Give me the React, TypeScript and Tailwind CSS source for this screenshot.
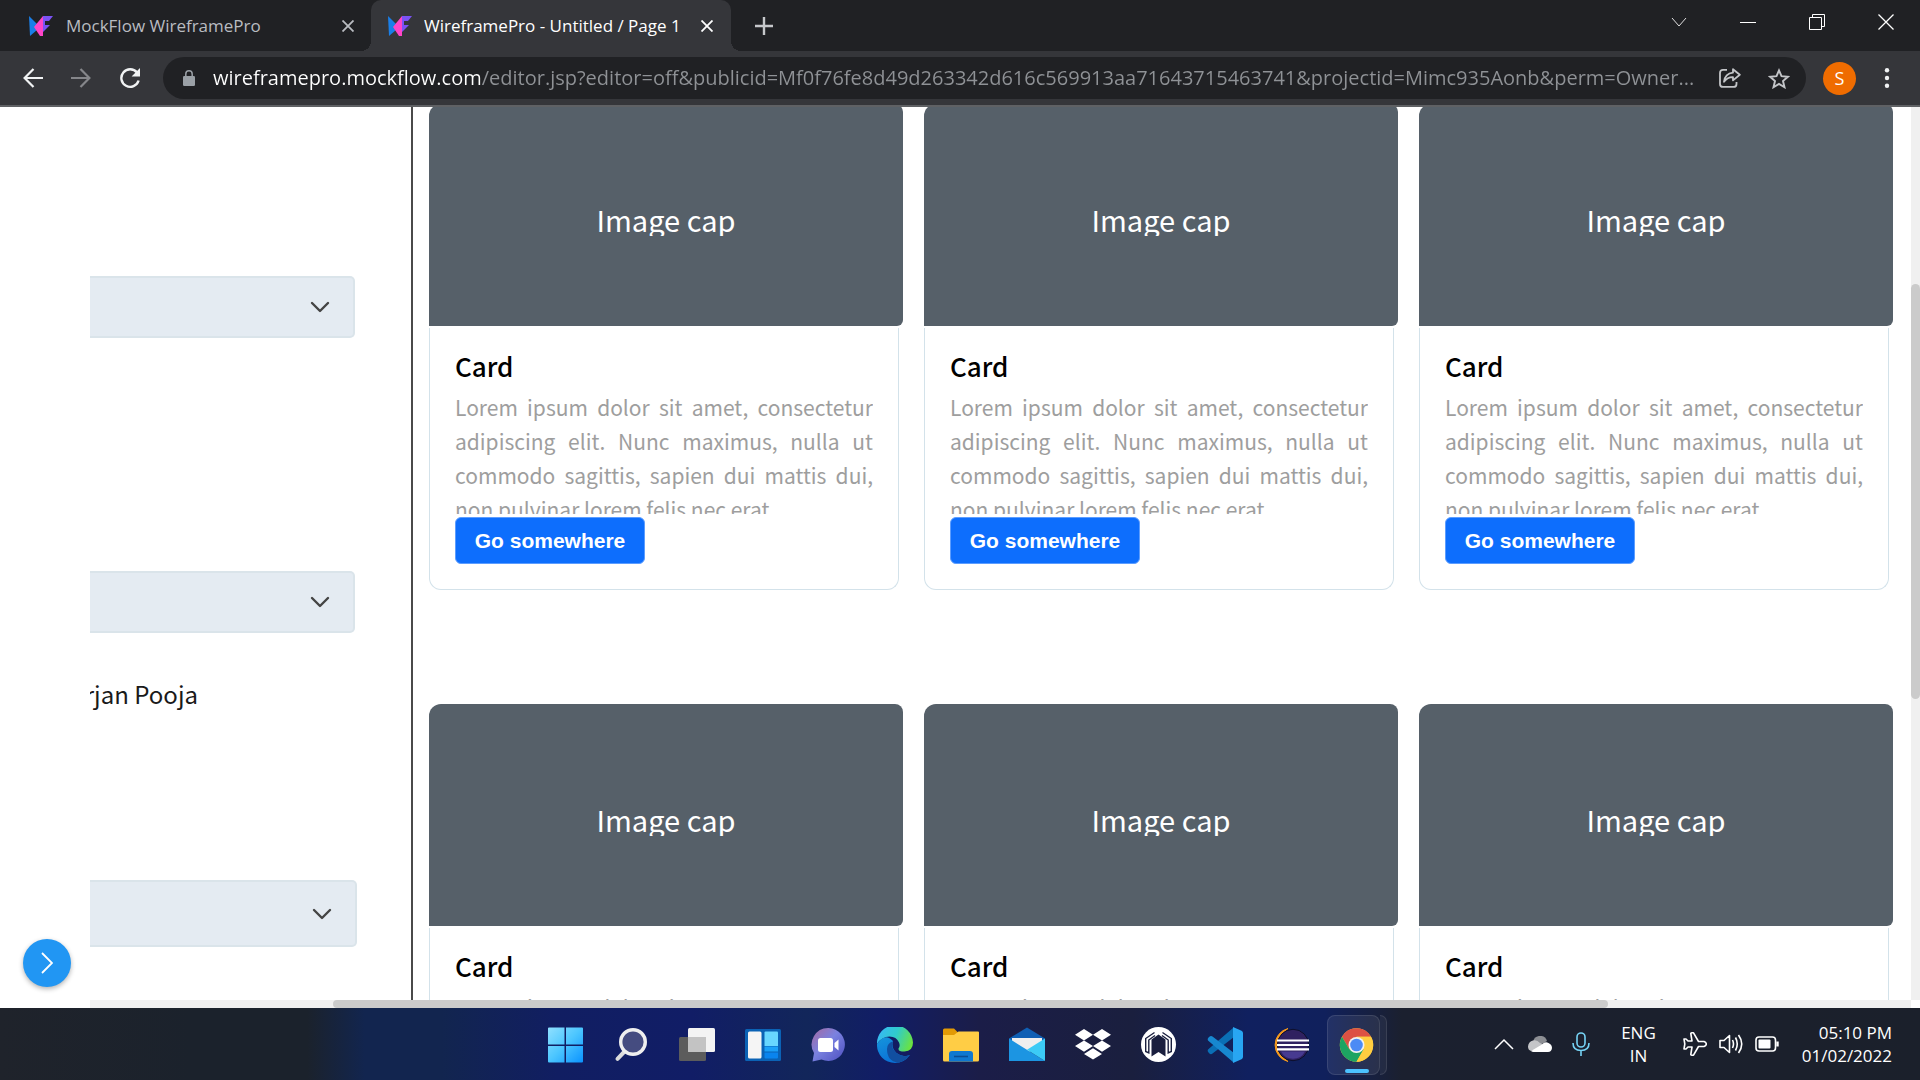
import React from "react";

const UI_FONT = "font-['Open_Sans','Noto_Sans',sans-serif]";
const CANVAS_FONT = "font-['Noto_Sans_CJK_SC','Noto_Sans',sans-serif]";

const PAGE_URL =
  "wireframepro.mockflow.com/editor.jsp?editor=off&publicid=Mf0f76fe8d49d263342d616c569913aa71643715463741&projectid=Mimc935Aonb&perm=Owner...";

const LOREM =
  "Lorem ipsum dolor sit amet, consectetur adipiscing elit. Nunc maximus, nulla ut commodo sagittis, sapien dui mattis dui, non pulvinar lorem felis nec erat";

function MockFlowLogo() {
  return (
    <svg viewBox="0 0 24 22" className="h-[22px] w-6 shrink-0" aria-hidden="true">
      <path d="M0 1 L8 9 L8 15 L1 21 Z" fill="#1a7fe8" />
      <path d="M14 1 L14 21 L11 21 L5 12 Z" fill="#ff45c8" />
      <path d="M14 1 H24 L20 6 H16 V10 H21 L14 17 Z" fill="#7a52f4" />
    </svg>
  );
}

function CloseIcon() {
  return (
    <svg viewBox="0 0 12 12" className="size-3" fill="none" stroke="currentColor" strokeWidth="1.8" aria-hidden="true">
      <path d="M.5 .5 L11.5 11.5 M11.5 .5 L.5 11.5" />
    </svg>
  );
}

function TabStrip() {
  return (
    <div className="flex h-[51px] bg-[#202124]">
      <div className="flex w-[371px] items-center pr-[17px] pl-[29px] text-[#b9bcc1]">
        <MockFlowLogo />
        <span className="ml-[13px] flex-1 truncate text-[17px]">MockFlow WireframePro</span>
        <button aria-label="Close MockFlow WireframePro">
          <CloseIcon />
        </button>
      </div>
      <div className="relative flex w-[360px] items-center rounded-t-[10px] bg-[#35363a] pr-[18px] pl-[17px] text-white">
        <span className="absolute bottom-0 -left-2.5 size-2.5 bg-[radial-gradient(circle_at_0_0,#202124_10px,#35363a_10px)]" />
        <span className="absolute -right-2.5 bottom-0 size-2.5 bg-[radial-gradient(circle_at_100%_0,#202124_10px,#35363a_10px)]" />
        <MockFlowLogo />
        <span className="ml-3 flex-1 overflow-hidden text-[17px] whitespace-nowrap">WireframePro - Untitled / Page 1</span>
        <button aria-label="Close WireframePro - Untitled / Page 1">
          <CloseIcon />
        </button>
      </div>
      <button aria-label="New tab" className="ml-6 text-[#c6c8cb]">
        <svg viewBox="0 0 18 18" className="size-[18px]" stroke="currentColor" strokeWidth="2.4" aria-hidden="true">
          <path d="M9 0 V18 M0 9 H18" />
        </svg>
      </button>
      <div className="ml-auto flex items-center gap-[53px] pr-[26px] pb-2 text-white">
        <button aria-label="Search tabs">
          <svg viewBox="0 0 16 16" className="size-4" fill="none" stroke="#e0e0e0" aria-hidden="true">
            <path d="M1 4 L8 12 L15 4" />
          </svg>
        </button>
        <button aria-label="Minimize">
          <svg viewBox="0 0 16 16" className="size-4" stroke="currentColor" aria-hidden="true">
            <path d="M0 8.5 H16" />
          </svg>
        </button>
        <button aria-label="Restore">
          <svg viewBox="0 0 16 16" className="size-4" fill="none" stroke="currentColor" aria-hidden="true">
            <path d="M.5 3.5 H12.5 V15.5 H.5 Z M3.5 3.5 V.5 H15.5 V12.5 H12.5" />
          </svg>
        </button>
        <button aria-label="Close window">
          <svg viewBox="0 0 16 16" className="size-4" fill="none" stroke="currentColor" strokeWidth="1.3" aria-hidden="true">
            <path d="M.5 .5 L15.5 15.5 M15.5 .5 L.5 15.5" />
          </svg>
        </button>
      </div>
    </div>
  );
}

function Toolbar() {
  return (
    <div className="flex h-14 items-center border-b-2 border-[#5f6164] bg-[#35363a] pr-[30px] pl-[23px]">
      <button aria-label="Back" className="mr-7">
        <svg viewBox="0 0 20 20" className="size-5" fill="none" stroke="#f1f3f4" strokeWidth="2.2" aria-hidden="true">
          <path d="M20 10 H2 M10.5 1 L1.6 10 L10.5 19" />
        </svg>
      </button>
      <button aria-label="Forward" className="mr-7">
        <svg viewBox="0 0 20 20" className="size-5" fill="none" stroke="#85868a" strokeWidth="2.2" aria-hidden="true">
          <path d="M0 10 H18 M9.5 1 L18.4 10 L9.5 19" />
        </svg>
      </button>
      <button aria-label="Reload" className="mr-[22px]">
        <svg viewBox="0 0 22 22" className="size-[22px]" fill="none" stroke="#f1f3f4" strokeWidth="2.4" aria-hidden="true">
          <path d="M18 5.5 A8.8 8.8 0 1 0 19.6 13.5" />
          <path d="M21 1 V9.4 H12.6 Z" fill="#f1f3f4" stroke="none" />
        </svg>
      </button>
      <div className="flex h-[42px] min-w-0 flex-1 items-center rounded-full bg-[#202124] pr-4 pl-5">
        <svg viewBox="0 0 12 16" className="h-4 w-3 shrink-0" fill="#9aa0a6" aria-hidden="true">
          <path d="M1.2 6 H10.8 Q12 6 12 7.2 V14.8 Q12 16 10.8 16 H1.2 Q0 16 0 14.8 V7.2 Q0 6 1.2 6 Z" />
          <path d="M2.8 6.5 V4 A3.2 3.2 0 0 1 9.2 4 V6.5" fill="none" stroke="#9aa0a6" strokeWidth="1.5" />
        </svg>
        <input
          aria-label="Address"
          readOnly
          value={PAGE_URL}
          className="ml-[18px] min-w-0 flex-1 bg-[linear-gradient(90deg,#ffffff_269px,#8f9296_269px)] bg-clip-text text-xl text-transparent outline-none"
        />
        <button aria-label="Share" className="ml-4">
          <svg viewBox="0 0 22 20" className="h-5 w-[22px]" fill="none" stroke="#c3c5c8" strokeWidth="1.8" strokeLinejoin="round" aria-hidden="true">
            <path d="M8 1.9 H4 Q1 1.9 1 4.9 V15.9 Q1 18.9 4 18.9 H14.5 Q17.5 18.9 17.5 15.9 V14" />
            <path d="M14 1.2 L20.8 6.8 L14 12.4 V9.2 Q8.5 9 5 13.8 Q6 5.4 14 4.6 Z" />
          </svg>
        </button>
        <button aria-label="Bookmark" className="ml-[27px]">
          <svg viewBox="0 0 22 21" className="h-[21px] w-[22px]" fill="none" stroke="#c3c5c8" strokeWidth="1.9" aria-hidden="true">
            <path d="M11 2.4 L13.5 8.2 L19.8 8.8 L15 13 L16.5 19.2 L11 15.9 L5.5 19.2 L7 13 L2.2 8.8 L8.5 8.2 Z" />
          </svg>
        </button>
      </div>
      <button className="ml-[17px] size-[33px] rounded-full bg-[#ef6c00] text-lg text-white">S</button>
      <button aria-label="Chrome menu" className="ml-7">
        <svg viewBox="0 0 6 20" className="h-5 w-1.5" fill="#f1f3f4" aria-hidden="true">
          <circle cx="3" cy="2.3" r="2.2" />
          <circle cx="3" cy="10" r="2.2" />
          <circle cx="3" cy="17.7" r="2.2" />
        </svg>
      </button>
    </div>
  );
}

function FilterSelect({ label, size }: { label: string; size: string }) {
  return (
    <div className={`grid items-center ${size}`}>
      <select
        aria-label={label}
        className="col-start-1 row-start-1 size-full appearance-none rounded-r-[5px] border-y-2 border-r-2 border-[#dae4ea] bg-[#e4ebf2]"
      />
      <svg
        viewBox="0 0 20 12"
        className="pointer-events-none col-start-1 row-start-1 mr-[25px] h-3 w-5 justify-self-end"
        fill="none"
        stroke="#444444"
        strokeWidth="2.4"
        strokeLinecap="round"
        strokeLinejoin="round"
        aria-hidden="true"
      >
        <path d="M2 2 L10 10 L18 2" />
      </svg>
    </div>
  );
}

function FilterPane() {
  return (
    <div className="flex w-[321px] shrink-0 flex-col pt-[169px]">
      <FilterSelect label="First filter" size="h-[62px] w-[265px]" />
      <FilterSelect label="Second filter" size="mt-[233px] h-[62px] w-[265px]" />
      <div className="mt-[42px] flex w-[108px] justify-end overflow-hidden text-2xl leading-[38px] whitespace-nowrap text-[#1a1a1a]">
        rjan Pooja
      </div>
      <FilterSelect label="Third filter" size="mt-[167px] h-[67px] w-[267px]" />
    </div>
  );
}

function Card() {
  return (
    <article>
      <div className="flex h-[222px] items-center justify-center rounded-tl-xl rounded-r-lg rounded-br-md bg-[#566069]">
        <span className="h-[41px] overflow-hidden text-[29px] leading-[48px] text-white">Image cap</span>
      </div>
      <div className="mt-0.5 mr-1 h-[262px] rounded-b-xl border-x border-b border-[#d3e2ea] px-[25px] pt-[18px]">
        <h2 className="h-[31px] overflow-hidden text-[26px] leading-10 font-medium text-black">Card</h2>
        <p className="mt-[13px] h-[124px] overflow-hidden text-justify text-[21px] leading-[34px] text-[#9e9e9e]">{LOREM}</p>
        <button className="mt-[3px] h-[47px] w-[190px] rounded-md border border-[#5c9dff] bg-[#0d6efd] font-['Liberation_Sans',sans-serif] text-[21px] font-bold text-white">
          Go somewhere
        </button>
      </div>
    </article>
  );
}

function Workspace() {
  return (
    <main className={`flex min-h-0 flex-1 bg-white ${CANVAS_FONT}`}>
      <div className="flex w-[90px] shrink-0 flex-col justify-end pb-[21px] pl-[23px]">
        <button aria-label="Expand panel" className="flex size-12 items-center justify-center rounded-full bg-[#2196f3] shadow-[0_2px_5px_rgba(0,0,0,0.3)]">
          <svg viewBox="0 0 12 22" className="h-[22px] w-3" fill="none" stroke="#ffffff" strokeWidth="1.8" aria-hidden="true">
            <path d="M1 1 L11 11 L1 21" />
          </svg>
        </button>
      </div>
      <div className="flex min-w-0 flex-1 flex-col">
        <div className="flex min-h-0 flex-1 overflow-hidden">
          <FilterPane />
          <div className="min-w-0 flex-1 border-l-2 border-[#4a4a4a] pr-[18px] pl-4">
            <div className="-mt-[3px] grid grid-cols-3 gap-x-[21px] gap-y-[114px]">
              {[1, 2, 3, 4, 5, 6].map((n) => (
                <Card key={n} />
              ))}
            </div>
          </div>
        </div>
        <div className="h-2 shrink-0 bg-[#f0f0f0] pr-[303px] pl-[243px]">
          <div className="h-full rounded-full bg-[#cbcbcb]" />
        </div>
      </div>
      <div className="mb-2 w-[9px] shrink-0 bg-[#f0f0f0] pt-[177px]">
        <div className="h-[415px] rounded-full bg-[#cbcbcb]" />
      </div>
    </main>
  );
}

const APPS: { name: string; art: React.ReactNode }[] = [
  {
    name: "Start",
    art: (
      <>
        <defs>
          <linearGradient id="win" gradientUnits="userSpaceOnUse" x1="1" y1="1" x2="35" y2="35">
            <stop offset="0" stopColor="#8fe0ff" />
            <stop offset=".5" stopColor="#4cc6ff" />
            <stop offset="1" stopColor="#0d95ff" />
          </linearGradient>
        </defs>
        <path d="M2 .5 H17.5 V17.5 H1 V1.5 Q1 .5 2 .5 Z M19 .5 H35 Q36 .5 36 1.5 V17.5 H19 Z M1 19 H17.5 V35.5 H2 Q1 35.5 1 34.5 Z M19 19 H36 V34.5 Q36 35.5 35 35.5 H19 Z" fill="url(#win)" />
      </>
    ),
  },
  {
    name: "Search",
    art: (
      <>
        <path d="M12 24 L4.5 31.8" stroke="#dcdcdc" strokeWidth="4" strokeLinecap="round" />
        <circle cx="20" cy="15" r="12.3" fill="#454c80" stroke="#efefef" strokeWidth="3.4" />
      </>
    ),
  },
  {
    name: "Task View",
    art: (
      <>
        <rect x="0" y="10" width="27" height="24" rx="1.5" fill="#5c5c5c" />
        <rect x="9" y="1" width="27" height="24" rx="1.5" fill="#f3f3f3" />
        <path d="M9 10 H27 V25 H10.5 Q9 25 9 23.5 Z" fill="#c3c3c3" />
      </>
    ),
  },
  {
    name: "Widgets",
    art: (
      <>
        <rect x="0" y="2" width="36" height="32" rx="1.5" fill="#0b62b5" />
        <rect x="3" y="4.5" width="13.5" height="27" rx="1.5" fill="#f5f5f5" />
        <path d="M20.5 4.5 H32 Q33 4.5 33 5.5 V19 H19.5 V5.5 Q19.5 4.5 20.5 4.5 Z" fill="#68d6ff" />
        <path d="M19.5 19.5 H33 V24.5 H19.5 Z" fill="#1ba0f8" />
        <path d="M19.5 25.5 H33 V30.5 Q33 31.5 32 31.5 H20.5 Q19.5 31.5 19.5 30.5 Z" fill="#0a84ee" />
      </>
    ),
  },
  {
    name: "Chat",
    art: (
      <>
        <defs>
          <linearGradient id="chat" x1="0" y1="0" x2="1" y2="1">
            <stop offset="0" stopColor="#a5689f" />
            <stop offset=".45" stopColor="#7a82e0" />
            <stop offset="1" stopColor="#4d4fc0" />
          </linearGradient>
        </defs>
        <path d="M17.5 1 A16.5 16.5 0 1 1 10.5 32.5 L1.500 34.5 L3 26 A16.5 16.5 0 0 1 17.5 1 Z" fill="url(#chat)" />
        <rect x="7" y="11" width="15" height="14" rx="2.5" fill="#ffffff" />
        <path d="M23.5 16 L27.5 12.5 V23.5 L23.5 20 Z" fill="#ffffff" />
      </>
    ),
  },
  {
    name: "Edge",
    art: (
      <>
        <defs>
          <linearGradient id="edgeTop" x1="0" y1=".3" x2="1" y2=".6">
            <stop offset="0" stopColor="#37b8f5" />
            <stop offset=".5" stopColor="#30cbcb" />
            <stop offset="1" stopColor="#6be33f" />
          </linearGradient>
          <linearGradient id="edgeBody" x1="0" y1="0" x2=".5" y2="1">
            <stop offset="0" stopColor="#1595dc" />
            <stop offset="1" stopColor="#0a6fd6" />
          </linearGradient>
        </defs>
        <path d="M0 17 A18 18 0 0 0 18 36 Q27 36 33 28 Q26 31 19.5 26 Q14 21 16 14 Q8 5 0 17 Z" fill="url(#edgeBody)" />
        <path d="M10 22 Q10 34 21 35.7 Q28 34.5 33 28 Q26 31 19.5 26 Q13.5 21 16 14.5 Q10 16 10 22 Z" fill="#114fa0" />
        <path d="M0 17 A18 18 0 0 1 36 15.5 Q36 24 27.5 24.5 Q21 24.5 21.5 21.5 Q23.5 19 22 15.5 Q19.5 9.5 12.5 9.5 Q4.5 9.5 0 17 Z" fill="url(#edgeTop)" />
      </>
    ),
  },
  {
    name: "File Explorer",
    art: (
      <>
        <path d="M0 3 Q0 1.5 1.5 1.5 H11 L15.5 6 V12 H0 Z" fill="#e29a05" />
        <path d="M0 8 H11 L15.5 4.5 H35 Q36 4.5 36 5.5 V33 Q36 34.5 34.5 34.5 H1.5 Q0 34.5 0 33 Z" fill="#ffcd45" />
        <path d="M6 34.5 V27 Q6 24 9 24 H27 Q30 24 30 27 V34.5 Z" fill="#0f78d0" />
        <path d="M11 29.5 H25" stroke="#0b4d93" strokeWidth="1.6" />
      </>
    ),
  },
  {
    name: "Mail",
    art: (
      <>
        <path d="M0 11.5 L18 .5 L36 11.5 V16 H0 Z" fill="#0f5fb4" />
        <path d="M3 11 H33 V18 L18 26 L3 18 Z" fill="#efefef" />
        <path d="M0 11.5 L36 34 H0 Z" fill="#1c95e2" />
        <path d="M36 11.5 V34 L18 22.7 Z" fill="#3ccbf6" />
      </>
    ),
  },
  {
    name: "Dropbox",
    art: (
      <path
        d="M9 2 L18 7.7 L9 13.4 L0 7.7 Z M27 2 L36 7.7 L27 13.4 L18 7.7 Z M9 13.4 L18 19.1 L9 24.8 L0 19.1 Z M27 13.4 L36 19.1 L27 24.8 L18 19.1 Z M18 21.2 L27 26.9 L18 32.6 L9 26.9 Z"
        fill="#ffffff"
      />
    ),
  },
  {
    name: "Arch",
    art: (
      <>
        <circle cx="17.5" cy="17.5" r="17.5" fill="#ffffff" />
        <path d="M10.5 29.500 V12.500 L17.5 7.5 L24.5 12.500 V29.500 L17.5 25 Z" fill="#1a1f3e" />
        <path
          d="M13.500 5.500 L4.700 11.5 V24.500 L7.800 26 V13 L14 8.500 M21.500 5.500 L30.300 11.5 V24.500 L27.200 26 V13 L21 8.500"
          fill="none"
          stroke="#1a1f3e"
          strokeWidth="1.4"
        />
      </>
    ),
  },
  {
    name: "Visual Studio Code",
    art: (
      <>
        <path d="M26 1 L1 22.5 Q0 24 1.5 25.5 L3 27 Q4.5 27.5 5.5 26.5 L27 10 Z" fill="#0a6fb5" />
        <path d="M26 35 L1 13.5 Q0 12 1.5 10.5 L3 9.2 Q4.5 8.5 5.5 9.5 L27 26 Z" fill="#1788d0" />
        <path d="M26 0 L34.5 3.8 Q36 4.5 36 6 V30 Q36 31.5 34.5 32.2 L26 36 Z" fill="#28a6f2" />
      </>
    ),
  },
  {
    name: "Eclipse",
    art: (
      <>
        <path d="M15 1.5 A17 17 0 0 0 15 34.5 A20 20 0 0 1 15 1.5 Z" fill="#f79a1c" stroke="#f79a1c" strokeWidth="1" />
        <circle cx="20" cy="18" r="15.7" fill="#2f2160" stroke="#0c0f2b" strokeWidth="1" />
        <path d="M8 24.5 H32 A13.5 13.5 0 0 1 8 24.5 Z" fill="#473a90" />
        <path d="M4 13.5 H36 M4 18 H36 M4 22.3 H36" stroke="#ffffff" strokeWidth="2.2" />
      </>
    ),
  },
  {
    name: "Chrome",
    art: (
      <>
        <circle cx="17.5" cy="18" r="16.7" fill="#ffcd40" />
        <path d="M17.5 18 L10.3 22.2 L3 9.7 A16.7 16.7 0 0 1 32 9.7 H17.5 Z" fill="#dd5144" />
        <path d="M3 9.7 L10.3 22.2 L24.7 22.2 L17.5 34.7 A16.7 16.7 0 0 1 3 9.7 Z" fill="#1da462" />
        <path d="M17.5 9.7 H32 A16.7 16.7 0 0 1 17.5 34.7 L24.7 22.2 Z" fill="#ffcd40" />
        <circle cx="17.5" cy="18" r="8" fill="#f1f1f1" />
        <circle cx="17.5" cy="18" r="6.3" fill="#4c8bf5" />
      </>
    ),
  },
];

function Taskbar() {
  return (
    <footer className="grid h-[72px] shrink-0 grid-cols-[1fr_auto_1fr] items-center bg-[linear-gradient(90deg,#1f232b_0%,#1b222c_10%,#1b222c_16%,#12254f_19%,#12254f_23%,#111e62_29%,#111d66_36%,#12265a_42%,#111d66_46%,#1b1d48_51%,#1a1f3e_59%,#10205f_65%,#10205c_69%,#1b202f_73%,#1b202b_100%)]">
      <nav aria-label="Pinned apps" className="col-start-2 flex gap-[30px] pt-0.5 pl-0.5">
        {APPS.map((app) =>
          app.name === "Chrome" ? (
            <button key={app.name} aria-label={app.name} className="relative -m-3 p-3">
              <span className="absolute inset-y-0 right-0 w-[7px] rounded-r-lg border-y border-r border-white/10 bg-white/5" />
              <span className="absolute inset-y-0 right-[7px] left-0 rounded-lg border border-white/10 bg-white/8" />
              <svg viewBox="0 0 36 36" className="relative size-9" aria-hidden="true">{app.art}</svg>
              <span className="absolute bottom-0.5 left-1/2 h-1 w-6 -translate-x-1/2 rounded-full bg-[#4cc2ff]" />
            </button>
          ) : (
            <button key={app.name} aria-label={app.name}>
              <svg viewBox="0 0 36 36" className="size-9" fill="none" aria-hidden="true">{app.art}</svg>
            </button>
          )
        )}
      </nav>
      <div className="flex items-center justify-end pr-7 text-[17px] leading-[23px] text-white">
        <button aria-label="Show hidden icons">
          <svg viewBox="0 0 20 12" className="h-3 w-5" fill="none" stroke="currentColor" strokeWidth="1.5" aria-hidden="true">
            <path d="M1 11 L10 2 L19 11" />
          </svg>
        </button>
        <button aria-label="OneDrive" className="ml-3.5">
          <svg viewBox="0 0 24 16" className="h-4 w-6" aria-hidden="true">
            <path d="M5 6 A7.2 7.2 0 0 1 19 5 L12 9 Z" fill="#8d8f94" />
            <path d="M5 4.5 Q9 3.5 12 7 L18 10 L3 15 Q0 14 0 10.5 Q.5 5.5 5 4.5 Z" fill="#c4c5c8" />
            <path d="M3 15 L14 8.5 Q17 5 20.5 7 Q24 8.5 24 12 Q23.5 16 20 16 H5.5 Q4 16 3 15 Z" fill="#ffffff" />
          </svg>
        </button>
        <button aria-label="Microphone" className="ml-5">
          <svg viewBox="0 0 18 24" className="h-6 w-[18px]" fill="none" stroke="#76d3f5" strokeWidth="1.6" aria-hidden="true">
            <rect x="5" y="1" width="8" height="14" rx="4" />
            <path d="M1 11 Q1 18.5 9 18.5 Q17 18.5 17 11 M9 18.5 V24" />
          </svg>
        </button>
        <button className="ml-[31px] text-center">
          ENG
          <br />
          IN
        </button>
        <button aria-label="Network, volume and battery" className="ml-[27px] flex gap-3">
          <svg viewBox="0 0 24 24" className="size-6" fill="none" stroke="currentColor" strokeWidth="1.6" strokeLinejoin="round" aria-hidden="true">
            <path d="M9 9 L7.8 1.5 Q8 .8 9 .8 H10.5 L15.5 9.5 H21 Q23.3 10.5 23.3 12 Q23.3 13.5 21 14.5 H15.5 L10.5 23.2 H9 Q8 23.2 7.8 22.5 L9 15 H5 L3 17 H1 L1.8 12 L1 7 H3 L5 9 Z" />
          </svg>
          <svg viewBox="0 0 24 24" className="size-6" fill="none" stroke="currentColor" strokeWidth="1.6" strokeLinejoin="round" aria-hidden="true">
            <path d="M1 8.5 H5 L10.5 3.5 V20.5 L5 15.5 H1 Z" />
            <path d="M13.5 8 Q15.5 12 13.5 16 M16.5 5.5 Q20 12 16.5 18.5 M19.5 3 Q26 12 19.5 21" />
          </svg>
          <svg viewBox="0 0 24 24" className="size-6" fill="none" stroke="currentColor" strokeWidth="1.6" aria-hidden="true">
            <rect x="1" y="5" width="19.5" height="14" rx="3" />
            <rect x="3.5" y="7.5" width="12" height="9" rx="1" fill="currentColor" stroke="none" />
            <path d="M22.5 9.5 V14.5" strokeWidth="2.4" />
          </svg>
        </button>
        <button className="ml-[23px] text-right">
          05:10 PM
          <br />
          01/02/2022
        </button>
      </div>
    </footer>
  );
}

export default function App() {
  return (
    <div className={`flex h-screen flex-col overflow-hidden ${UI_FONT}`}>
      <header className="shrink-0">
        <TabStrip />
        <Toolbar />
      </header>
      <Workspace />
      <Taskbar />
    </div>
  );
}
